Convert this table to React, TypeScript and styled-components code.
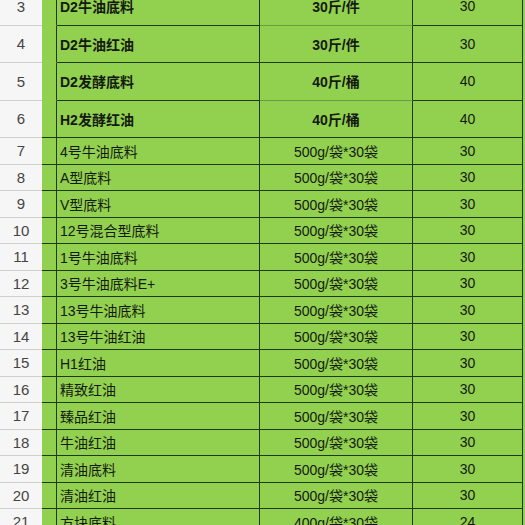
import React from 'react'
import styled, { createGlobalStyle } from 'styled-components'

const GlobalStyle = createGlobalStyle`
  html, body {
    margin: 0;
    padding: 0;
    background: #92d050;
    overflow: hidden;
  }
  body {
    font-family: "Liberation Sans", "Noto Sans CJK SC", sans-serif;
  }
`

const green = '#92d050'
const line = '#1f3a12'

const Sheet = styled.div`
  width: 525px;
  height: 525px;
  overflow: hidden;
  background: ${green};
`

const Rows = styled.div`
  display: flex;
  flex-direction: column;
  margin-top: -13px;
`

const Row = styled.div<{ $h: number }>`
  display: grid;
  grid-template-columns: 42px 15px 203px 153px 110px 1fr;
  height: ${(p) => p.$h}px;
  font-weight: ${(p) => (p.$h > 30 ? 700 : 400)};
`

const RowHead = styled.div`
  background: #f6f6f6;
  border-top: 1px solid #cfcfcf;
  color: #454545;
  font-size: 15px;
  font-weight: 400;
  display: flex;
  align-items: center;
  justify-content: center;
`

const Blank = styled.div<{ $merged?: boolean }>`
  background: ${green};
  border-top: 1.5px solid ${(p) => (p.$merged ? 'transparent' : line)};
  border-right: 1.5px solid ${line};
`

const Cell = styled.div<{ $align?: 'left' | 'center'; $soft?: boolean; $plain?: boolean }>`
  background: ${green};
  border-top: 1.5px solid ${(p) => (p.$soft ? '#6f9a45' : line)};
  border-right: 1.5px solid ${line};
  color: #151a10;
  font-size: 14px;
  font-weight: ${(p) => (p.$plain ? 400 : 'inherit')};
  display: flex;
  align-items: center;
  justify-content: ${(p) => (p.$align === 'left' ? 'flex-start' : 'center')};
  padding-left: ${(p) => (p.$align === 'left' ? '3px' : '0')};
  white-space: nowrap;
  overflow: hidden;
`

const Edge = styled.div`
  background: ${green};
`

type Item = { no: number; name: string; spec: string; qty: string }

const big: Item[] = [
  { no: 3, name: 'D2牛油底料', spec: '30斤/件', qty: '30' },
  { no: 4, name: 'D2牛油红油', spec: '30斤/件', qty: '30' },
  { no: 5, name: 'D2发酵底料', spec: '40斤/桶', qty: '40' },
  { no: 6, name: 'H2发酵红油', spec: '40斤/桶', qty: '40' },
]

const smallNames = [
  '4号牛油底料',
  'A型底料',
  'V型底料',
  '12号混合型底料',
  '1号牛油底料',
  '3号牛油底料E+',
  '13号牛油底料',
  '13号牛油红油',
  'H1红油',
  '精致红油',
  '臻品红油',
  '牛油红油',
  '清油底料',
  '清油红油',
  '方块底料',
]

const small: Item[] = smallNames.map((name, i) => ({
  no: i + 7,
  name,
  spec: name === '方块底料' ? '400g/袋*30袋' : '500g/袋*30袋',
  qty: name === '方块底料' ? '24' : '30',
}))

export default function App() {
  return (
    <Sheet>
      <GlobalStyle />
      <Rows>
        {big.map((r) => (
          <Row key={r.no} $h={37.5}>
            <RowHead>{r.no}</RowHead>
            <Blank $merged />
            <Cell $align="left">{r.name}</Cell>
            <Cell $soft={r.no === 4 || r.no === 6}>{r.spec}</Cell>
            <Cell $plain>{r.qty}</Cell>
            <Edge />
          </Row>
        ))}
        {small.map((r) => (
          <Row key={r.no} $h={26.5}>
            <RowHead>{r.no}</RowHead>
            <Blank />
            <Cell $align="left">{r.name}</Cell>
            <Cell>{r.spec}</Cell>
            <Cell>{r.qty}</Cell>
            <Edge />
          </Row>
        ))}
      </Rows>
    </Sheet>
  )
}
